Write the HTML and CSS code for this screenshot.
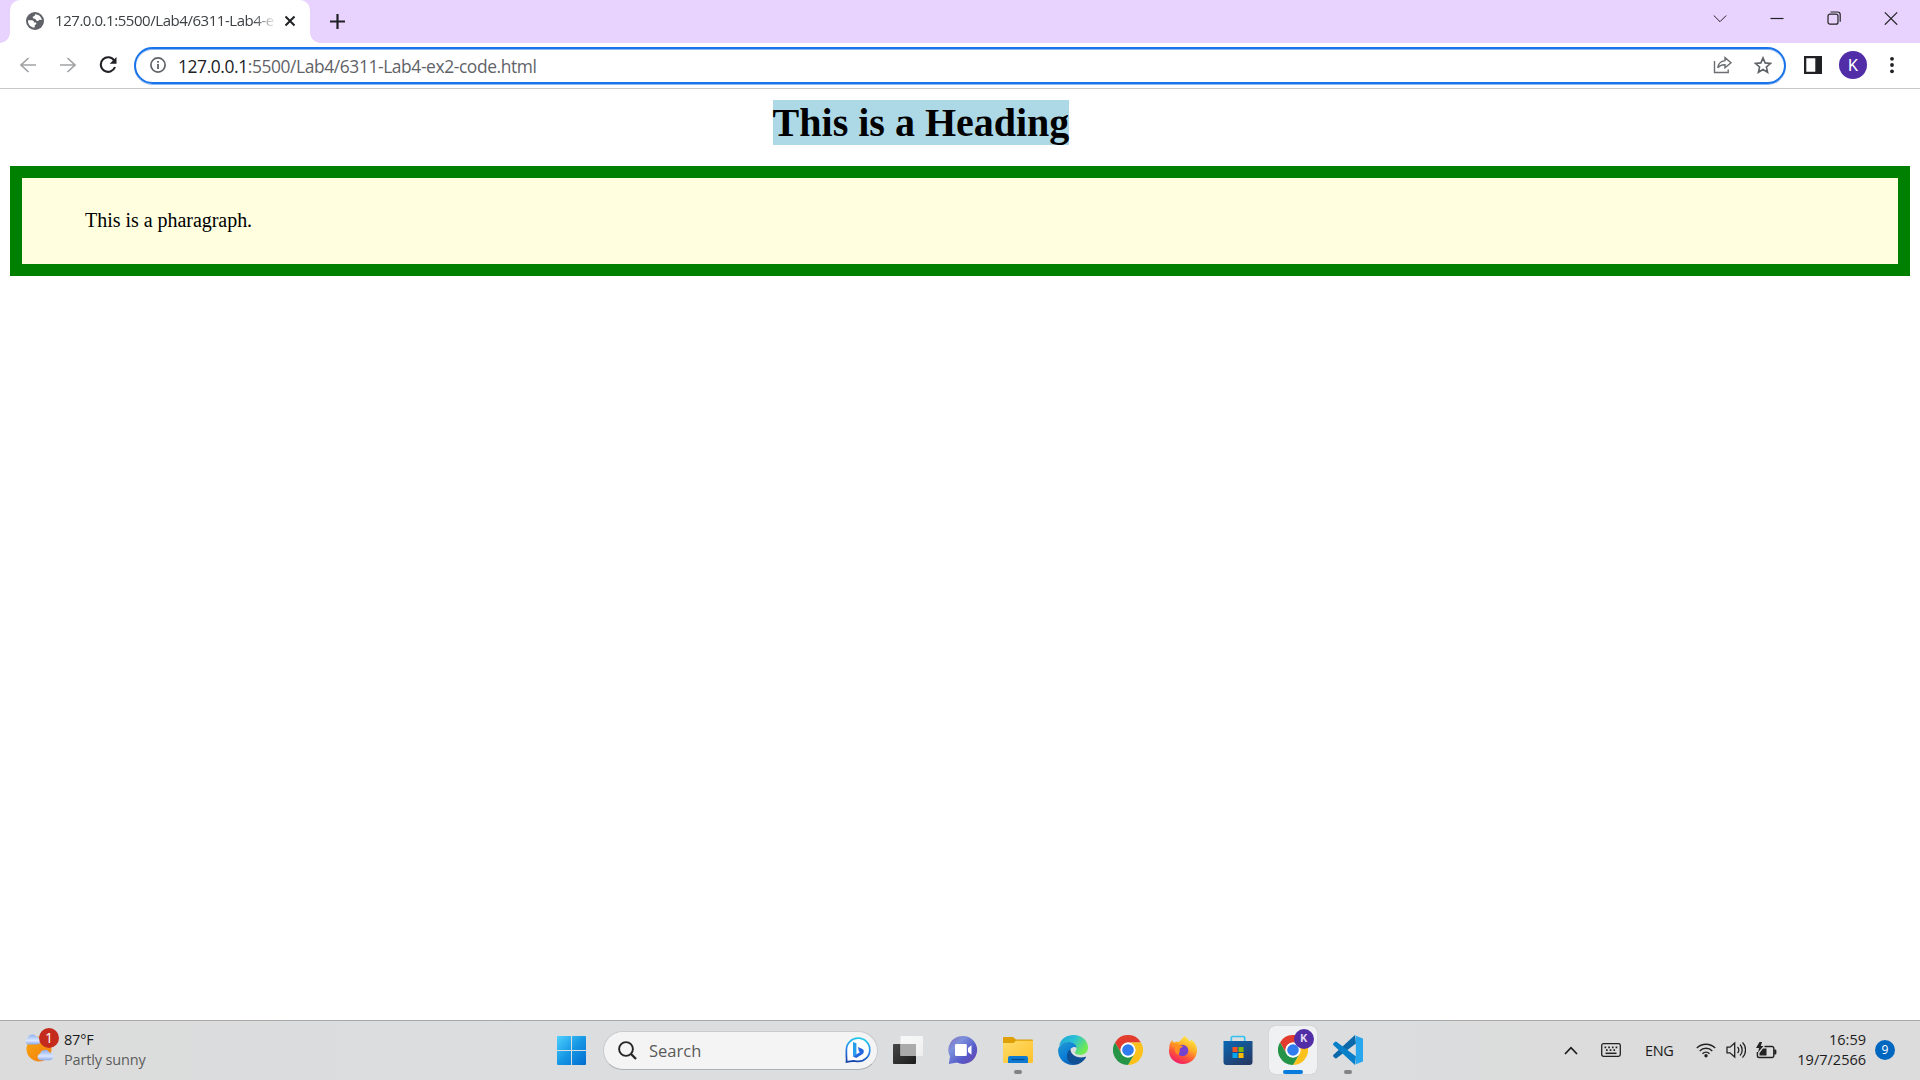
FILE: index.html
```html
<!DOCTYPE html>
<html lang="en">
<head>
<meta charset="utf-8">
<title>6311-Lab4-ex2</title>
<link rel="stylesheet" href="styles.css">
</head>
<body>
<div class="screen">
  <header class="tabstrip">
    <div class="tab">
      <svg class="favicon" width="18" height="18" viewBox="0 0 18 18"><circle cx="9" cy="9" r="9" fill="#5f6368"/><path d="M2 8.2 5.6 8.3c1.700 0 2.300.7 2.400 2.100l2 .1c.8.9.2 2-.7 2.300-.7.2-.6 1.200-.6 2.800C4.600 15.600 1.700 12.200 2 8.200z" fill="#fff"/><path d="M9 2.200C9.200 3.600 8 4.500 6.800 4.600 6.700 6 6.800 6.700 8.600 6.700c1.400 0 1.200 1.800 2.600 2.300 1.600.4 1.300-1.200 2.400-1.200l2.200.2C15.300 4.500 12.600 2.300 9 2.200z" fill="#fff"/></svg>
      <span class="tab-title">127.0.0.1:5500/Lab4/6311-Lab4-e</span>
      <svg class="tab-close" width="12" height="12" viewBox="0 0 12 12"><path d="M1.500 1.500l9 9m0-9l-9 9" stroke="#202124" stroke-width="2"/></svg>
    </div>
    <svg class="new-tab" width="15" height="15" viewBox="0 0 15 15"><path d="M7.500 0v15M0 7.500h15" stroke="#202124" stroke-width="2.200"/></svg>
    <div class="window-controls">
      <svg width="14" height="14" viewBox="0 0 14 14"><path d="M.8 4.500l6.200 6.200 6.200-6.200" stroke-width="1"/></svg>
      <svg width="14" height="14" viewBox="0 0 14 14"><path d="M.5 7.500h13"/></svg>
      <svg width="14" height="14" viewBox="0 0 14 14"><rect x="1" y="3.200" width="10" height="10" rx="2"/><path d="M3.500 1h7a2.700 2.700 0 0 1 2.700 2.700v7"/></svg>
      <svg width="14" height="14" viewBox="0 0 14 14"><path d="M.8 1.300l12.400 12.400m0-12.400L.8 13.700"/></svg>
    </div>
  </header>

  <nav class="toolbar">
    <div class="nav-buttons">
      <svg width="18" height="18" viewBox="0 0 18 18"><path d="M17 9H2m7.500-7L2 9l7.500 7" fill="none" stroke="#a0a2a5" stroke-width="1.700"/></svg>
      <svg width="18" height="18" viewBox="0 0 18 18"><path d="M1 9h15M8.500 2L16 9l-7.500 7" fill="none" stroke="#a0a2a5" stroke-width="1.700"/></svg>
      <svg width="18" height="18" viewBox="0 0 18 18"><path d="M15.400 4.800A7.300 7.300 0 1 0 16 11" fill="none" stroke="#202124" stroke-width="2.100"/><path d="M17.500 1v6.800h-6.800z" fill="#202124"/></svg>
    </div>
    <div class="omnibox">
      <svg width="16" height="16" viewBox="0 0 16 16"><circle cx="8" cy="8" r="7.100" fill="none" stroke="#5f6368" stroke-width="1.700"/><path d="M7.100 7h1.800v5H7.100zM7.100 4h1.800v1.700H7.100z" fill="#5f6368"/></svg>
      <span class="url"><span class="host">127.0.0.1</span>:5500/Lab4/6311-Lab4-ex2-code.html</span>
      <svg class="share" width="20" height="18" viewBox="0 0 20 18" fill="none" stroke="#6b6e72" stroke-width="1.400"><path d="M1.500 5v11.500h13.700v-3"/><path d="M12 1.600l6 5.100-6 5.100V8.700c-3.600-.1-5.700.9-7.200 3.200.4-4.200 2.800-6.800 7.200-7.300z"/></svg>
      <svg class="star" width="18" height="18" viewBox="0 0 18 18"><path d="M9 1.900l2.100 5 5.400.5-4.100 3.600 1.200 5.300L9 13.500l-4.600 2.800L5.600 11 1.500 7.400l5.400-.5z" fill="none" stroke="#5f6368" stroke-width="1.600"/></svg>
    </div>
    <svg class="side-panel" width="18" height="18" viewBox="0 0 18 18"><path d="M0 0h18v18H0zM2.300 2.300v13.400h9V2.300z" fill="#202124" fill-rule="evenodd"/></svg>
    <div class="avatar">K</div>
    <svg class="menu" width="4" height="18" viewBox="0 0 4 18" fill="#202124"><circle cx="2" cy="2.800" r="1.900"/><circle cx="2" cy="9" r="1.900"/><circle cx="2" cy="15.300" r="1.900"/></svg>
  </nav>

  <main class="document">
    <h1 class="heading"><span class="heading-text">This is a Heading</span></h1>
    <p class="paragraph">This is a pharagraph.</p>
  </main>

  <footer class="taskbar">
    <div class="weather">
      <div class="weather-icon">
        <svg width="30" height="30" viewBox="0 0 30 30">
          <defs>
            <linearGradient id="sun" x1="0" y1="0" x2="1" y2="1"><stop offset="0" stop-color="#f7a80d"/><stop offset="1" stop-color="#f47b12"/></linearGradient>
            <linearGradient id="cloud" x1="0" y1="0" x2="0" y2="1"><stop offset="0" stop-color="#8fb0ee"/><stop offset=".6" stop-color="#dbe7ff"/><stop offset="1" stop-color="#8ba9ea"/></linearGradient>
          </defs>
          <circle cx="15" cy="16" r="12.500" fill="url(#sun)"/>
          <path d="M3.500 11.500a3.500 3.500 0 0 1 .2-6.500 5 5 0 0 1 9-1.200c2.500.3 4 2 4 4 0 2.300-1.500 3.700-4 3.700z" fill="url(#cloud)"/>
          <path d="M16 27.300a3.600 3.600 0 0 1 .2-6.900 5 5 0 0 1 9-1.200c2.800.4 4.200 2.100 4.200 4.100 0 2.500-1.700 4-4.200 4z" fill="url(#cloud)"/>
        </svg>
        <span class="weather-badge">1</span>
      </div>
      <div class="weather-text"><span class="temp">87°F</span><span class="sky">Partly sunny</span></div>
    </div>

    <div class="apps">
      <svg class="start" width="29" height="29" viewBox="0 0 29 29"><defs><linearGradient id="win" x1="0" y1="0" x2="1" y2="1"><stop offset="0" stop-color="#4fd0ff"/><stop offset=".5" stop-color="#1697e4"/><stop offset="1" stop-color="#006ccf"/></linearGradient></defs><path d="M1 0h13v14H0V1a1 1 0 0 1 1-1zM15 0h13a1 1 0 0 1 1 1v13H15zM0 15h14v14H1a1 1 0 0 1-1-1zM15 15h14v13a1 1 0 0 1-1 1H15z" fill="url(#win)"/></svg>
      <div class="search">
        <svg width="19" height="19" viewBox="0 0 19 19"><circle cx="8" cy="8" r="6.900" fill="none" stroke="#242424" stroke-width="1.900"/><path d="M12.800 12.800l5.200 5.200" stroke="#242424" stroke-width="2.300"/></svg>
        <span class="search-text">Search</span>
        <svg class="bing" width="26" height="26" viewBox="0 0 26 26"><defs><linearGradient id="bingring" x1=".6" y1="0" x2=".4" y2="1"><stop offset="0" stop-color="#23cbe8"/><stop offset=".5" stop-color="#2885ef"/><stop offset="1" stop-color="#1745ac"/></linearGradient></defs><path d="M13.300 1.200a11.600 11.600 0 1 1-.2 23.200c-2 0-3.400-.5-4.500-.5l-7.100 1c.3-2.600-.1-4.600-.1-7V13A11.600 11.600 0 0 1 13.300 1.200z" fill="#fff" stroke="url(#bingring)" stroke-width="1.700"/><path d="M8 5l3.400 1.200v11.200L8 19.600z" fill="#249ff0"/><path d="M13 10l5 2.200c1.200 1.700 1 3.500-.3 4.700l-6.500 4.200L8 19.500l7.200-4.400-1.300-.7z" fill="#2467df"/></svg>
      </div>

      <div class="app"><svg width="32" height="30" viewBox="0 0 32 30"><defs><linearGradient id="dk" x1="0" y1="0" x2="1" y2="1"><stop offset="0" stop-color="#464646"/><stop offset="1" stop-color="#1c1c1c"/></linearGradient><linearGradient id="lt" x1="0" y1="0" x2="1" y2="1"><stop offset="0" stop-color="#fff" stop-opacity=".8"/><stop offset="1" stop-color="#eee"/></linearGradient></defs><rect x="1" y="9" width="23" height="20" rx="1" fill="url(#dk)"/><rect x="8.500" y="1" width="22.500" height="20" rx="1" fill="url(#lt)"/><path d="M8.500 9H24v12H8.500z" fill="#aaa"/></svg></div>

      <div class="app"><svg width="30" height="30" viewBox="0 0 30 30"><defs><linearGradient id="chat" x1="0" y1="0" x2="1" y2="1"><stop offset="0" stop-color="#8868b6"/><stop offset=".3" stop-color="#7d91dc"/><stop offset=".65" stop-color="#555ac9"/><stop offset="1" stop-color="#6c42aa"/></linearGradient></defs><path d="M15 1a14 14 0 1 1-6 26.600L.8 29 2 21.500A14 14 0 0 1 15 1z" fill="url(#chat)"/><rect x="7" y="9" width="11.800" height="12" rx="1.200" fill="#fff"/><path d="M20 13l3.500-2.800v9.600L20 17z" fill="#fff"/></svg></div>

      <div class="app"><svg width="30" height="30" viewBox="0 0 30 30"><defs><linearGradient id="fold" x1="0" y1="0" x2="1" y2="1"><stop offset="0" stop-color="#ffdc68"/><stop offset="1" stop-color="#ffc12d"/></linearGradient></defs><path d="M0 3a1 1 0 0 1 1-1h9l3 2.500h16a1 1 0 0 1 1 1V10H0z" fill="#dea006"/><path d="M0 8h10.500L13 5.800h17V27a1 1 0 0 1-1 1H1a1 1 0 0 1-1-1z" fill="url(#fold)"/><path d="M5 28v-5a2 2 0 0 1 2-2h16a2 2 0 0 1 2 2v5z" fill="#0e7bd3"/><path d="M8.500 24.500h13" stroke="#0b4b8b" stroke-width="1.200"/></svg><i class="mark"></i></div>

      <div class="app"><svg width="30" height="30" viewBox="0 0 30 30"><defs><linearGradient id="edge1" x1="0" y1="0" x2="1" y2=".5"><stop offset="0" stop-color="#1da1d3"/><stop offset=".5" stop-color="#29c0d7"/><stop offset="1" stop-color="#70eb51"/></linearGradient><linearGradient id="edge2" x1="0" y1="0" x2=".8" y2="1"><stop offset="0" stop-color="#249bd5"/><stop offset=".55" stop-color="#087bd3"/><stop offset="1" stop-color="#104f9d"/></linearGradient></defs><path d="M1 11C2.600 3.700 8.700 0 15.500 0 24 0 30 5.800 30 12.500c0 4.800-3.700 7.400-7.700 7.400-2.500 0-5.300-.9-5.300-2.400 0-1 1.500-1.500 1.500-3.700C18.500 9.900 14.900 7.500 11 7.500 6 7.500 2.400 9.600 1 11z" fill="url(#edge1)"/><path d="M0 15C1 9.800 5.400 7 10.500 7c4.300 0 7.700 2.400 8 5.500-3.200-1.700-7 .8-7 5 0 5.300 5.200 10 14.200 7.500C22.700 28.700 19 30 15 30 6.500 30 0 23.600 0 15z" fill="url(#edge2)"/><path d="M12.500 14c-.2 5.700 6.600 10.200 15 7.800.7-.1.600.5.200 1.100C22.600 31 8.500 31.500 9 20.500c.1-3 1.700-5.300 3.500-6.500z" fill="#104f94"/></svg></div>

      <div class="app"><svg width="30" height="30" viewBox="0 0 30 30"><g id="chrome"><path d="M2 7.500A15 15 0 0 1 28 7.500H15a7.500 7.500 0 0 0-6.500 11.200z" fill="#e33b2e"/><path d="M28 7.500A15 15 0 0 1 15 30l6.500-11.300A7.500 7.500 0 0 0 15 7.500z" fill="#fcc21b"/><path d="M15 30A15 15 0 0 1 2 7.500l6.500 11.300a7.500 7.500 0 0 0 13 0z" fill="#259447"/><circle cx="15" cy="15" r="7.500" fill="#fff"/><circle cx="15" cy="15" r="5.800" fill="#307cef"/></g></svg></div>

      <div class="app"><svg width="30" height="30" viewBox="0 0 30 30"><defs><linearGradient id="fox" x1=".8" y1="0" x2=".3" y2="1"><stop offset="0" stop-color="#fff34b"/><stop offset=".4" stop-color="#ffae25"/><stop offset=".7" stop-color="#ff533b"/><stop offset="1" stop-color="#ed196b"/></linearGradient></defs><path d="M1.500 10C2 7.500 3.500 6 4.500 5c0 1.500.6 2 1.200 2.500C7.500 6.600 10 6.800 11 7c2-2.800 4.500-3.600 5-6 3.600 1.400 4.500 5 6.500 5.500l.2-2C26 6 29.300 10.500 29 16c-.5 7.500-6.500 13-14 13S1 23.500 1 16z" fill="url(#fox)"/><circle cx="14.500" cy="15.500" r="5.800" fill="#7542cf"/><path d="M3 11c2-2 5-2.500 7.500-1.500 1 1 2.700 1.200 4.500 1.200 0 1.500-2.500 2-3.500 3.300 1.300 2.500-1.500 4-.2 6-4-1-5.300-4.500-3.800-8z" fill="#ff8f20"/></svg></div>

      <div class="app"><svg width="30" height="30" viewBox="0 0 30 30"><defs><linearGradient id="store" x1="0" y1="0" x2=".7" y2="1"><stop offset="0" stop-color="#0968b5"/><stop offset="1" stop-color="#243b67"/></linearGradient></defs><path d="M.5 6h29v21a3 3 0 0 1-3 3h-23a3 3 0 0 1-3-3z" fill="url(#store)"/><path d="M8.300 6V3a1.500 1.500 0 0 1 1.500-1.500h10.400A1.500 1.500 0 0 1 21.700 3v3" fill="none" stroke="#33c1f4" stroke-width="1.700"/><path d="M9.500 12h5v5h-5z" fill="#f35325"/><path d="M15.500 12h5v5h-5z" fill="#7fba0a"/><path d="M9.500 18h5v5h-5z" fill="#05a6f0"/><path d="M15.500 18h5v5h-5z" fill="#ffba08"/></svg></div>

      <div class="app active"><svg width="30" height="30" viewBox="0 0 30 30"><use href="#chrome"/></svg><span class="profile">K</span><i class="mark running"></i></div>

      <div class="app"><svg width="30" height="30" viewBox="0 0 30 30"><path d="M22 0l1 8.500L3.500 23.200a1.300 1.300 0 0 1-1.600-.1L.5 21.700a1.300 1.300 0 0 1 0-1.900z" fill="#0b68a9"/><path d="M22 30l1-8.500L3.500 6.800a1.300 1.300 0 0 0-1.600.1L.5 8.300a1.300 1.300 0 0 0 0 1.900z" fill="#087fc9"/><path d="M21.500.2L30 3.500v23l-8.500 3.300c.8-.3 1.300-.8 1.300-1.700V2c0-.8-.5-1.500-1.300-1.800z" fill="#28a7ef"/></svg><i class="mark"></i></div>
    </div>

    <div class="tray">
      <svg class="chevron" width="14" height="9" viewBox="0 0 14 9"><path d="M1 8l6-6.300L13 8" fill="none" stroke="#1b1b1b" stroke-width="1.700"/></svg>
      <svg class="keyboard" width="20" height="14" viewBox="0 0 20 14"><rect x=".7" y=".7" width="18.600" height="12.600" rx="1.800" fill="none" stroke="#222" stroke-width="1.300"/><path d="M3.500 4.300h13M5 7.200h11" stroke="#222" stroke-width="1.700" stroke-dasharray="1.700 2"/><path d="M4.500 10.300h11" stroke="#222" stroke-width="1.500"/></svg>
      <span class="lang">ENG</span>
      <div class="status">
        <svg width="20" height="16" viewBox="0 0 20 16" fill="none" stroke="#222" stroke-width="1.400"><path d="M.8 6a13 13 0 0 1 18.400 0M3.700 8.900a8.900 8.900 0 0 1 12.600 0M6.500 11.700a5 5 0 0 1 7 0"/><circle cx="10" cy="13.800" r="1.700" fill="#222" stroke="none"/></svg>
        <svg width="20" height="18" viewBox="0 0 20 18" fill="none" stroke="#222" stroke-width="1.300"><path d="M1 6.200h3L8.700 2v14L4 11.800H1z"/><path d="M11.500 6a4 4 0 0 1 0 6M14 3.500a8 8 0 0 1 0 11M16.500 1.400a11 11 0 0 1 0 15.200"/></svg>
        <svg class="battery" width="21" height="17" viewBox="0 0 21 17"><path d="M8.500 4.500H16a1.800 1.800 0 0 1 1.800 1.800v7.400a1.800 1.800 0 0 1-1.800 1.800H3.200a1.800 1.800 0 0 1-1.800-1.800V10" fill="none" stroke="#222" stroke-width="1.400"/><path d="M18.200 7.500h1a1.200 1.200 0 0 1 1.200 1.200v2.600a1.200 1.200 0 0 1-1.200 1.200h-1zM3.500 11L7 6.500h3.500v7h-7zM3.500 0L0 6h3L2 10.500 7.500 4H4.800L6 0z" fill="#222"/></svg>
      </div>
      <div class="clock"><span>16:59</span><span>19/7/2566</span></div>
      <span class="notifications">9</span>
    </div>
  </footer>
</div>
</body>
</html>
```
FILE: styles.css
```css
* { box-sizing: border-box; }
body { margin: 0; background: #fff; font-family: "Open Sans", "Noto Sans", sans-serif; }
svg { display: block; flex: none; }
.screen { display: flex; flex-direction: column; width: 1920px; height: 1080px; overflow: hidden; }

/* Tab strip */
.tabstrip { display: flex; align-items: flex-start; flex: none; height: 43px; background: #e8d3ff; }
.tab { position: relative; display: flex; align-items: center; width: 300px; height: 43px; margin-left: 10px; padding: 0 14px 1px 16px; border-radius: 10px 10px 0 0; background: #fff; }
.tab::before, .tab::after { content: ""; position: absolute; bottom: 0; width: 10px; height: 10px; }
.tab::before { left: -10px; background: radial-gradient(circle at 0 0, transparent 9.500px, #fff 10px); }
.tab::after { right: -10px; background: radial-gradient(circle at 100% 0, transparent 9.500px, #fff 10px); }
.tab-title { width: 222px; margin-left: 11px; padding-bottom: 3px; white-space: nowrap; font-size: 15px; line-height: 20px; letter-spacing: -.45px; color: #3c4043; -webkit-mask-image: linear-gradient(90deg, #000 198px, transparent 222px); mask-image: linear-gradient(90deg, #000 198px, transparent 222px); }
.tab-close { margin-left: auto; }
.new-tab { margin: 14px 0 0 20px; }
.window-controls { display: flex; gap: 43px; margin: 11px 22px 0 auto; fill: none; stroke: #222; stroke-width: 1.200; }

/* Toolbar */
.toolbar { display: flex; align-items: center; flex: none; height: 46px; padding: 0 26px 1px 18px; border-bottom: 1px solid #c9c9cb; }
.nav-buttons { display: flex; gap: 22px; width: 116px; padding-left: .5px; }
.omnibox { display: flex; align-items: center; width: 1652px; height: 37px; padding: 0 12px 0 14px; border: 2px solid #1a73e8; border-radius: 19px; box-shadow: 0 1px 0 #8cb8f3, inset 0 1px 0 #8cb8f3; }
.url { margin: 1px 0 0 12px; font-size: 17.400px; line-height: 24px; letter-spacing: -.4px; white-space: nowrap; color: #5f6368; }
.host { color: #202124; }
.share { margin-left: auto; }
.star { margin-left: 21px; }
.side-panel { margin-left: 18px; }
.avatar { display: flex; align-items: center; justify-content: center; width: 28px; height: 28px; margin-left: 17px; border-radius: 50%; background: #512da8; color: #fff; font: 16px Roboto, sans-serif; }
.menu { margin-left: auto; }

/* Displayed document */
.document { flex: 1; padding: 11px 10px 0; font-family: "Liberation Serif", serif; color: #000; }
.heading { display: flex; justify-content: center; margin: 0 78px 21px 0; font-size: 40px; line-height: 45px; font-weight: 700; }
.heading-text { background: lightblue; white-space: nowrap; }
.paragraph { margin: 0; padding: 31px 63px 33px; border: 12px solid green; background: #ffffe0; font-size: 20px; line-height: 22px; letter-spacing: -.03px; }

/* Taskbar */
.taskbar { display: flex; align-items: center; flex: none; height: 60px; padding-bottom: 1px; border-top: 1px solid #a9a9aa; background: linear-gradient(90deg, #dcdcdc 0, #dbdddf 30%, #dbdddf 68%, #dcdcdc 82%); color: #1b1b1b; }
.weather { display: flex; align-items: center; width: 557px; padding-left: 24px; }
.weather-icon { position: relative; margin-top: -4px; }
.weather-badge { position: absolute; left: 15px; top: -5px; width: 20px; height: 20px; border-radius: 50%; background: #c42b1c; color: #fff; font-size: 14px; line-height: 20px; text-align: center; }
.weather-text { display: flex; flex-direction: column; margin-left: 10px; font-size: 14.500px; line-height: 20px; white-space: nowrap; }
.temp { letter-spacing: -.2px; }
.sky { letter-spacing: -.15px; color: #5d5d5d; }
.apps { display: flex; align-items: center; }
.start { margin-top: 1px; }
.search { display: flex; align-items: center; width: 275px; height: 39px; margin: 0 2px 0 17px; padding: 0 6px 0 14px; border: 1px solid #c9cbcc; border-bottom-color: #aeb0b1; border-radius: 20px; background: #f4f4f4; }
.search-text { margin: 1px 0 0 12px; font-size: 16.500px; line-height: 22px; color: #5a5a5a; }
.bing { margin-left: auto; }
.app { position: relative; display: flex; align-items: center; justify-content: center; width: 48px; height: 48px; margin: 0 3.530px; border-radius: 6px; }
.active { background: #eff1f2; box-shadow: 0 0 1px #aaa; }
.mark { position: absolute; left: 20px; bottom: 0; width: 8px; height: 4px; border-radius: 2px; background: #828384; }
.running { left: 14px; width: 20px; background: #087bdc; }
.profile { position: absolute; left: 25px; top: 3px; width: 20px; height: 20px; border-radius: 50%; background: #512da8; color: #e2d9f2; font: 700 11px/20px Roboto, sans-serif; text-align: center; }
.tray { display: flex; align-items: center; margin-left: auto; padding-right: 25px; }
.keyboard { margin-left: 23px; }
.lang { width: 30px; margin-left: 24px; font-size: 14.500px; letter-spacing: -.3px; }
.status { display: flex; align-items: center; gap: 10px; margin-left: 21px; }
.clock { display: flex; flex-direction: column; width: 78px; margin-left: 11px; font-size: 14.500px; line-height: 20px; text-align: right; white-space: nowrap; }
.notifications { width: 20px; height: 20px; margin-left: 9px; border-radius: 50%; background: #0067c0; color: #fff; font-size: 12px; line-height: 20px; text-align: center; }
```
